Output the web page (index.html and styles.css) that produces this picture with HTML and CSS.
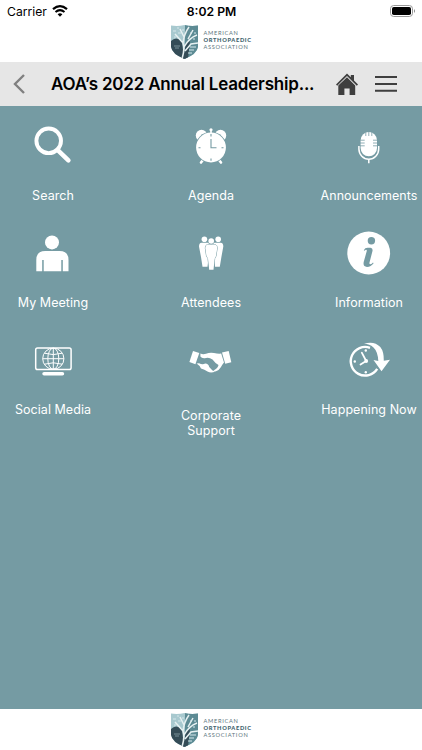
FILE: index.html
```html
<!DOCTYPE html>
<html lang="en">
<head>
  <meta charset="UTF-8" />
  <meta name="viewport" content="width=device-width, initial-scale=1" />
  <title>AOA's 2022 Annual Leadership Meeting</title>
  <link rel="stylesheet" href="styles.css">
</head>
<body>
  <!-- shared logo shield -->
  <svg width="0" height="0" class="defs">
    <symbol id="shield" viewBox="0 0 27 34">
      <clipPath id="shieldClip"><path d="M0 0.5Q7 1.5 13.5 0Q20 1.5 27 0.5V22Q26 29 13.5 34Q1 29 0 22Z"/></clipPath>
      <g clip-path="url(#shieldClip)">
        <rect width="27" height="34" fill="#a8c9cf"/>
        <path d="M14 0H27V34H14Z" fill="#5d8b94"/>
        <path d="M0 16Q5 11 11 16L13 34H0Z" fill="#344c57"/>
        <path d="M15 18L19 16L17 34H12Z" fill="#344c57"/>
        <path d="M11 34Q14 24 12 18L4 9M12 18Q13 9 18 2M13 22Q18 13 26 10M13 12L9 4M17 14L22 5M14 26L20 19L27 18" fill="none" stroke="#e6f0f1" stroke-width="1.5"/>
        <path d="M2 6H5M6 3H8M7 8H10M11 5H13M19 8H21M23 8H25M22 14H24M19 22H25M18 25H23M17 28H21M3 12H5" stroke="#d6e8eb" stroke-width="1.2"/>
        <path d="M3 21H9M4 23H8" stroke="#8ca2aa" stroke-width=".8"/>
      </g>
    </symbol>
  </svg>

  <div class="status-bar">
    <div class="carrier">
      <span>Carrier</span>
      <svg width="16" height="12" viewBox="0 0 16 12">
        <path d="M1 4.2Q8 -1.8 15 4.2" fill="none" stroke="#000" stroke-width="2.2"/>
        <path d="M3.5 7Q8 3.2 12.5 7" fill="none" stroke="#000" stroke-width="2"/>
        <path d="M5.6 9.2Q8 7.2 10.4 9.2L8 11.8Z"/>
      </svg>
    </div>
    <div class="time">8:02 PM</div>
    <svg class="battery" width="26" height="12" viewBox="0 0 26 12">
      <rect x=".5" y=".5" width="22" height="11" rx="3.2" fill="none" stroke="#999"/>
      <rect x="2" y="2" width="19" height="8" rx="1.8"/>
      <path d="M24 4Q26 6 24 8Z" fill="#888"/>
    </svg>
  </div>

  <div class="logo-bar">
    <svg width="27" height="34"><use href="#shield"/></svg>
    <div class="logo-text">
      <span>AMERICAN</span>
      <strong>ORTHOPAEDIC</strong>
      <span>ASSOCIATION</span>
    </div>
  </div>

  <div class="nav-bar">
    <svg class="back" width="14" height="22" viewBox="0 0 14 22"><path d="M12 2L3 11L12 20" fill="none" stroke="#808080" stroke-width="2.4"/></svg>
    <h1>AOA’s 2022 Annual Leadership...</h1>
    <svg class="home" width="22" height="23" viewBox="0 0 22 23" fill="#3f3f3f">
      <path d="M11 .5L14.8 4.2V2H18V7.4L22 11.6L20.8 12.8L11 3.1L1.2 12.8L0 11.6Z"/>
      <path d="M11 4.3L19.2 12.4V22H13.6V15.5H8.4V22H2.3V12.4Z"/>
    </svg>
    <svg class="menu" width="22" height="16" viewBox="0 0 22 16"><path d="M0 1H22M0 8H22M0 14.8H22" stroke="#3f3f3f" stroke-width="2"/></svg>
  </div>

  <div class="menu-grid">
    <div class="tile">
      <svg viewBox="0 0 106 80">
        <circle cx="48.7" cy="34.8" r="12.3" fill="none" stroke="#fff" stroke-width="3.9"/>
        <path d="M57.5 43.8L68.4 54.4" stroke="#fff" stroke-width="4.5" stroke-linecap="round"/>
      </svg>
      <span>Search</span>
    </div>
    <div class="tile">
      <svg viewBox="0 0 106 80">
        <circle cx="43.5" cy="29.5" r="5.7"/>
        <circle cx="62.5" cy="29.5" r="5.7"/>
        <path d="M45 54L43 56.5M61 54L63 56.5" stroke="#fff" stroke-width="2.6" stroke-linecap="round"/>
        <circle class="gap" cx="53" cy="41.5" r="15.7"/>
        <circle cx="53" cy="41.5" r="14.9"/>
        <path d="M53 24V29" stroke="#fff" stroke-width="1.6"/>
        <circle cx="53" cy="23.8" r="1.6"/>
        <path class="line" d="M53 33V41.7H58.5M53 28V30.5M53 52.5V54.7M40.5 41.7H42.5M63.5 41.7H65.5" stroke-width="1.1"/>
      </svg>
      <span>Agenda</span>
    </div>
    <div class="tile">
      <svg viewBox="0 0 106 80">
        <rect x="44.6" y="26" width="16.4" height="24.3" rx="8.2"/>
        <path class="line" d="M49.8 25.5V30M52.8 25.5V30M55.8 25.5V30M44 34.2H48.7M44 37H48.7M44 39.8H48.7M57 34.2H62M57 37H62M57 39.8H62" stroke-width=".8"/>
        <path d="M42.9 40V43A9.9 10.2 0 0 0 62.7 43V40" fill="none" stroke="#fff" stroke-width="1.5"/>
        <path d="M52.8 53V57.2" stroke="#fff" stroke-width="1.5"/>
      </svg>
      <span>Announcements</span>
    </div>
    <div class="tile">
      <svg viewBox="0 0 106 80">
        <circle cx="52" cy="29.4" r="7"/>
        <path d="M36.3 58.3V47Q36.3 38 45.3 38H59.5Q68.5 38 68.5 47V58.3H62.8V47H61.3V58.3H43.7V47H42.2V58.3Z"/>
      </svg>
      <span>My Meeting</span>
    </div>
    <div class="tile">
      <svg viewBox="0 0 106 80">
        <circle cx="46.4" cy="26.3" r="2.8"/>
        <circle cx="60.2" cy="26.3" r="2.8"/>
        <path d="M43.5 29.7H50Q52 30.2 52 33L49.5 53.8H44.5L43 44L41 33.5Q41 30 43.5 29.7Z"/>
        <path d="M62.8 29.7H56.3Q54.3 30.2 54.3 33L57 53.8H61.8L63.4 44L65.3 33.5Q65.3 30 62.8 29.7Z"/>
        <path class="line" d="M49.5 31.5H57Q59.3 32 59.2 35L58 43L56.7 45.5L55.5 56.8H51.2L50 45.5L48.5 43L47.3 35Q47.3 32 49.5 31.5Z" stroke-width="1"/>
        <path d="M49.5 31.5H57Q59.3 32 59.2 35L58 43L56.7 45.5L55.5 56.8H51.2L50 45.5L48.5 43L47.3 35Q47.3 32 49.5 31.5Z"/>
        <circle class="gap" cx="53.2" cy="28" r="3.2"/>
        <circle cx="53.2" cy="28" r="2.8"/>
      </svg>
      <span>Attendees</span>
    </div>
    <div class="tile">
      <svg viewBox="0 0 106 80">
        <circle cx="52.7" cy="40" r="21.4"/>
        <circle class="gap" cx="55.4" cy="27.8" r="3.7"/>
        <path class="gap" d="M47.8 37.2Q49 34.8 51.5 34.8H54.5Q57 35 56.5 38L53.5 49.5Q53.1 51.3 54.5 51.2Q55.8 51 57 49.5L57.6 50.2Q55 53.9 51 53.9Q46.8 53.5 47.7 49L50.7 38.3Q51.2 36.5 49.8 36.8L48.4 37.8Z"/>
      </svg>
      <span>Information</span>
    </div>
    <div class="tile">
      <svg viewBox="0 0 106 80">
        <g fill="none" stroke="#fff" stroke-width="1">
          <rect x="35.7" y="27.9" width="35.4" height="21.7" rx="1.8" stroke-width="1.5"/>
          <circle cx="53.3" cy="38.7" r="10.6"/>
          <ellipse cx="53.3" cy="38.7" rx="5.5" ry="10.6"/>
          <path d="M53.3 28V49.3M42.7 38.7H63.9M44.4 33.2Q53.3 36 62.2 33.2M44.4 44.2Q53.3 41.4 62.2 44.2"/>
        </g>
        <rect x="42.3" y="52" width="21.9" height="3.6" rx="1.8"/>
      </svg>
      <span>Social Media</span>
    </div>
    <div class="tile tall">
      <svg viewBox="0 0 106 80">
        <path d="M35 31L41.3 32.9L37.4 44.2L31.4 42.1Z"/>
        <path d="M64 32.6L70.7 30.9L73.3 42.2L67.2 43.7Z"/>
        <path d="M42.4 33.6Q45 34.6 48 33.8Q52 32 56 33Q60 34 63.2 33.6L66 42.4Q64.2 44.5 63 47Q61 50.5 57.5 51.6L55.5 50.6Q60 48 60.5 45Q57 43 54.5 39.5Q51 37 48 38Q44 38.8 42.4 36.6Z"/>
        <path d="M38.6 43.6L41 43.2Q44.5 45.3 47.2 43.6Q50.6 43.8 51.2 47L54.5 50.4L57.3 51.6Q53 53.5 49.5 51.6L46.4 49.8L43 48.6L41.6 46Z"/>
      </svg>
      <span>Corporate Support</span>
    </div>
    <div class="tile">
      <svg viewBox="0 0 106 80">
        <path d="M54 27.8A14.3 14.3 0 1 0 61.2 48.8" fill="none" stroke="#fff" stroke-width="2.4"/>
        <path d="M48 23.8Q58 20.5 64.3 27Q68 31.5 67.8 40.7L74 39.7L65.5 51.3L57.5 40L62.3 41Q61.8 31.5 57.5 27.5Q53.5 23.8 48 23.8Z"/>
        <path d="M45.8 32.7L50.2 41L44.5 44.6" fill="none" stroke="#fff" stroke-width="1.8" stroke-linecap="round"/>
        <circle cx="50.2" cy="41" r="1.9"/>
        <circle cx="49.8" cy="30.5" r="1.2"/>
        <circle cx="38.8" cy="41.5" r="1.2"/>
        <circle cx="49.8" cy="52.2" r="1.2"/>
      </svg>
      <span>Happening Now</span>
    </div>
  </div>

  <div class="logo-bar footer">
    <svg width="27" height="34"><use href="#shield"/></svg>
    <div class="logo-text">
      <span>AMERICAN</span>
      <strong>ORTHOPAEDIC</strong>
      <span>ASSOCIATION</span>
    </div>
  </div>
</body>
</html>
```
FILE: styles.css
```css
* {
  box-sizing: border-box;
}
body {
  margin: 0;
  height: 750px;
  display: flex;
  flex-direction: column;
  font-family: Inter, "Liberation Sans", sans-serif;
  background: #fff;
  overflow: hidden;
}
svg {
  display: block;
  flex-shrink: 0;
}
.defs {
  position: absolute;
}
.status-bar {
  height: 22px;
  padding: 0 6px 0 7px;
  display: grid;
  grid-template-columns: 1fr auto 1fr;
  align-items: center;
  font-size: 12.2px;
}
.carrier {
  display: flex;
  align-items: center;
  gap: 5px;
}
.time {
  font-weight: 600;
}
.battery {
  justify-self: end;
}
.logo-bar {
  height: 40px;
  padding-top: 3px;
  display: flex;
  justify-content: center;
  align-items: flex-start;
  gap: 6px;
}
.logo-text {
  display: flex;
  flex-direction: column;
  padding-top: 4px;
  font-family: Lato, sans-serif;
  font-size: 5.7px;
  line-height: 7px;
  letter-spacing: 0.7px;
  color: #60767e;
  width: 48px;
}
.logo-text strong {
  font-weight: 900;
  letter-spacing: 0.65px;
  color: #40626c;
}
.nav-bar {
  height: 44px;
  background: #e6e6e6;
  display: flex;
  align-items: center;
  padding: 0 25px 0 12px;
}
h1 {
  margin: 0 0 0 25px;
  width: 264px;
  font-size: 17px;
  font-weight: 600;
  letter-spacing: -0.2px;
  white-space: nowrap;
}
.home {
  margin-left: 21px;
}
.menu {
  margin-left: auto;
}
.menu-grid {
  flex: 1;
  background: #759ba3;
  display: grid;
  grid-template-columns: repeat(3, 106px);
  grid-auto-rows: 107px;
  justify-content: space-between;
  align-content: start;
}
.tile {
  display: flex;
  flex-direction: column;
  align-items: center;
  color: #fff;
  font-size: 12.5px;
  line-height: 15px;
  letter-spacing: 0.05px;
  text-align: center;
}
.tile svg {
  width: 106px;
  height: 80px;
  fill: #fff;
}
.tile span {
  margin-top: 2px;
}
.tile.tall span {
  width: 80px;
  margin-top: 8px;
}
.tile .gap {
  fill: #759ba3;
}
.tile .line {
  fill: none;
  stroke: #759ba3;
}
.footer {
  height: 41px;
  padding-top: 4px;
}
```
